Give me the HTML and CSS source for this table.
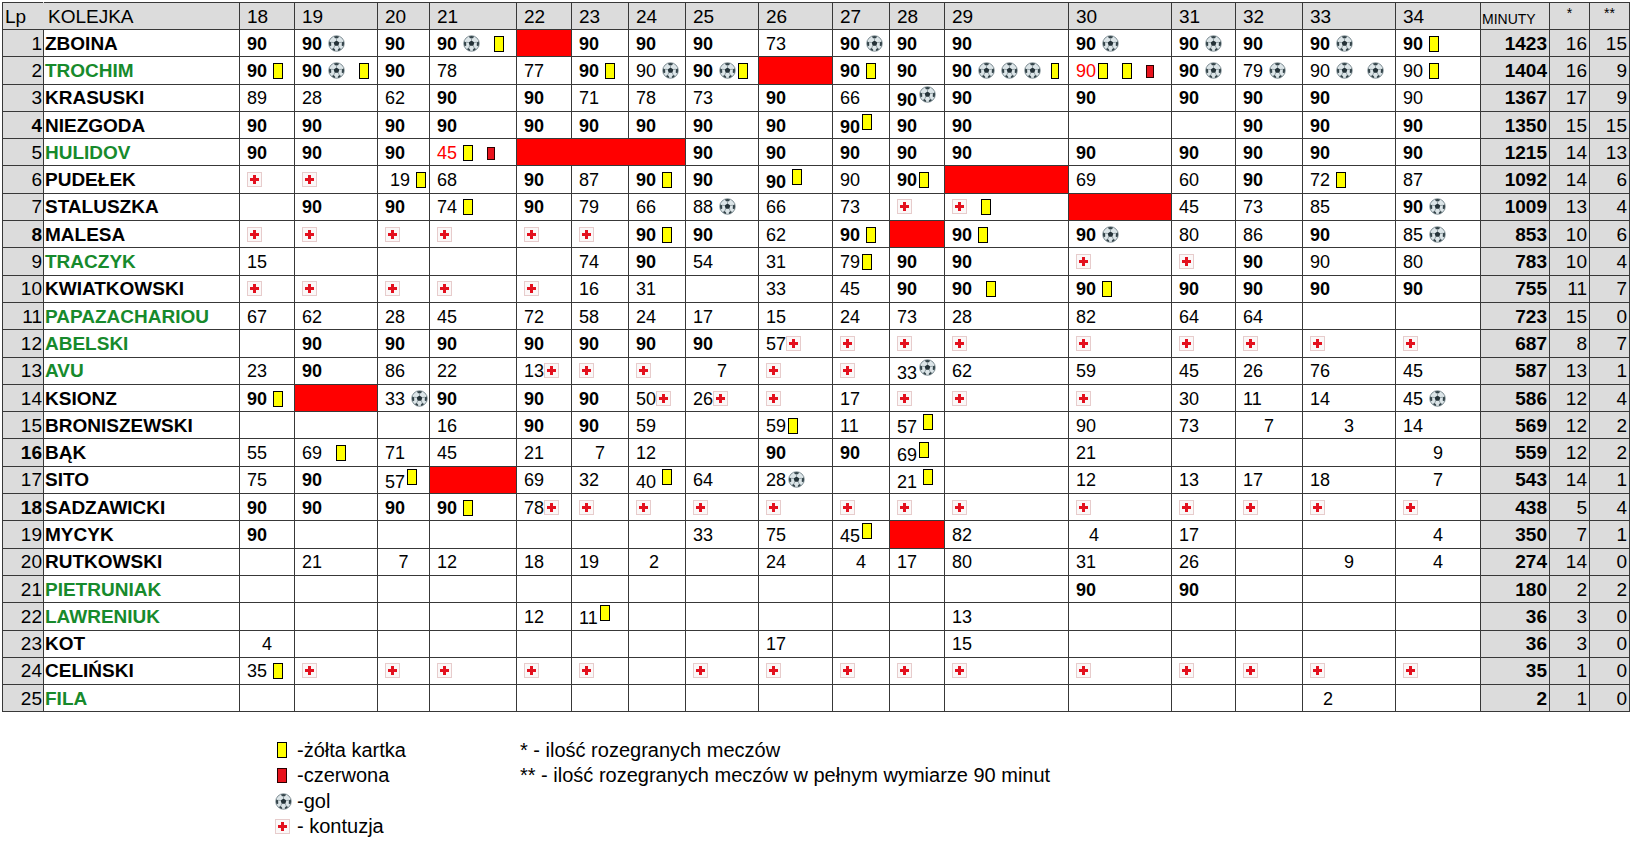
FILE: index.html
```html
<!DOCTYPE html>
<html lang="pl">
<head>
<meta charset="utf-8">
<title>Kolejka</title>
<link rel="stylesheet" href="styles.css">
</head>
<body>
<svg class="defs" width="0" height="0" aria-hidden="true">
  <symbol id="ball" viewBox="0 0 16 16">
    <circle cx="8" cy="8" r="7.3" fill="#dce5e8" stroke="#6f8086" stroke-width="0.8"/>
    <polygon points="8,5.2 10.7,7.1 9.7,10.2 6.3,10.2 5.3,7.1" fill="#243238"/>
    <path d="M5.5 1.3 Q8 0.5 10.5 1.3 L9.4 3 L6.6 3 Z" fill="#34444a"/>
    <path d="M1.1 6 L2.9 6.8 L3.1 9.8 L1.5 10.8 Q0.6 8.4 1.1 6Z" fill="#34444a"/>
    <path d="M14.9 6 L13.1 6.8 L12.9 9.8 L14.5 10.8 Q15.4 8.4 14.9 6Z" fill="#34444a"/>
    <path d="M3.6 13.2 L5.4 12.2 L6.8 13.8 L6.4 15 Q4.8 14.6 3.6 13.2Z" fill="#34444a"/>
    <path d="M12.4 13.2 L10.6 12.2 L9.2 13.8 L9.6 15 Q11.2 14.6 12.4 13.2Z" fill="#34444a"/>
    <path d="M8 3 V5.2 M5.3 7.1 L2.9 6.8 M10.7 7.1 L13.1 6.8 M6.3 10.2 L5.4 12.2 M9.7 10.2 L10.6 12.2" stroke="#6d7d83" stroke-width="0.6" fill="none"/>
  </symbol>
</svg>

<table class="kol">
  <colgroup>
    <col class="w-lp"><col class="w-nm">
    <col class="w18"><col class="w19"><col class="w20"><col class="w21"><col class="w22"><col class="w23"><col class="w24"><col class="w25"><col class="w26"><col class="w27"><col class="w28"><col class="w29"><col class="w30"><col class="w31"><col class="w32"><col class="w33"><col class="w34">
    <col class="w-mn"><col class="w-s"><col class="w-s">
  </colgroup>
  <thead>
    <tr>
      <th class="h-lp">Lp</th><th class="h-nm">KOLEJKA</th>
      <th>18</th><th>19</th><th>20</th><th>21</th><th>22</th><th>23</th><th>24</th><th>25</th><th>26</th><th>27</th><th>28</th><th>29</th><th>30</th><th>31</th><th>32</th><th>33</th><th>34</th>
      <th class="h-mn">MINUTY</th><th class="h-s">*</th><th class="h-s">**</th>
    </tr>
  </thead>
  <tbody>
    <tr>
      <td class="lp">1</td><td class="nm">ZBOINA</td>
      <td><b>90</b></td><td><b>90</b><svg class="ball"><use href="#ball"/></svg></td><td><b>90</b></td><td><b>90</b><svg class="ball"><use href="#ball"/></svg><i class="yc sp"></i></td><td class="x"></td><td><b>90</b></td><td><b>90</b></td><td><b>90</b></td><td>73</td><td><b>90</b><svg class="ball"><use href="#ball"/></svg></td><td><b>90</b></td><td><b>90</b></td><td><b>90</b><svg class="ball"><use href="#ball"/></svg></td><td><b>90</b><svg class="ball"><use href="#ball"/></svg></td><td><b>90</b></td><td><b>90</b><svg class="ball"><use href="#ball"/></svg></td><td><b>90</b><i class="yc"></i></td>
      <td class="mn">1423</td><td class="st">16</td><td class="st">15</td>
    </tr>
    <tr>
      <td class="lp">2</td><td class="nm gr">TROCHIM</td>
      <td><b>90</b><i class="yc"></i></td><td><b>90</b><svg class="ball"><use href="#ball"/></svg><i class="yc sp"></i></td><td><b>90</b></td><td>78</td><td>77</td><td><b>90</b><i class="yc"></i></td><td>90<svg class="ball"><use href="#ball"/></svg></td><td><b>90</b><svg class="ball"><use href="#ball"/></svg><i class="yc t"></i></td><td class="x"></td><td><b>90</b><i class="yc"></i></td><td><b>90</b></td><td><b>90</b><svg class="ball"><use href="#ball"/></svg><svg class="ball"><use href="#ball"/></svg><svg class="ball"><use href="#ball"/></svg><i class="yc sm"></i></td><td><span class="rt">90</span><i class="yc t"></i><i class="yc sp"></i><i class="rc sp"></i></td><td><b>90</b><svg class="ball"><use href="#ball"/></svg></td><td>79<svg class="ball"><use href="#ball"/></svg></td><td>90<svg class="ball"><use href="#ball"/></svg><svg class="ball sp"><use href="#ball"/></svg></td><td>90<i class="yc"></i></td>
      <td class="mn">1404</td><td class="st">16</td><td class="st">9</td>
    </tr>
    <tr>
      <td class="lp">3</td><td class="nm">KRASUSKI</td>
      <td>89</td><td>28</td><td>62</td><td><b>90</b></td><td><b>90</b></td><td>71</td><td>78</td><td>73</td><td><b>90</b></td><td>66</td><td><b>90</b><svg class="ball up t"><use href="#ball"/></svg></td><td><b>90</b></td><td><b>90</b></td><td><b>90</b></td><td><b>90</b></td><td><b>90</b></td><td>90</td>
      <td class="mn">1367</td><td class="st">17</td><td class="st">9</td>
    </tr>
    <tr>
      <td class="lp lb">4</td><td class="nm">NIEZGODA</td>
      <td><b>90</b></td><td><b>90</b></td><td><b>90</b></td><td><b>90</b></td><td><b>90</b></td><td><b>90</b></td><td><b>90</b></td><td><b>90</b></td><td><b>90</b></td><td><b>90</b><i class="yc t up"></i></td><td><b>90</b></td><td><b>90</b></td><td></td><td></td><td><b>90</b></td><td><b>90</b></td><td><b>90</b></td>
      <td class="mn">1350</td><td class="st">15</td><td class="st">15</td>
    </tr>
    <tr>
      <td class="lp">5</td><td class="nm gr">HULIDOV</td>
      <td><b>90</b></td><td><b>90</b></td><td><b>90</b></td><td><span class="rt">45</span><i class="yc"></i><i class="rc sp"></i></td><td class="x" colspan="3"></td><td><b>90</b></td><td><b>90</b></td><td><b>90</b></td><td><b>90</b></td><td><b>90</b></td><td><b>90</b></td><td><b>90</b></td><td><b>90</b></td><td><b>90</b></td><td><b>90</b></td>
      <td class="mn">1215</td><td class="st">14</td><td class="st">13</td>
    </tr>
    <tr>
      <td class="lp">6</td><td class="nm">PUDEŁEK</td>
      <td><i class="inj"></i></td><td><i class="inj"></i></td><td class="m2">19<i class="yc"></i></td><td>68</td><td><b>90</b></td><td>87</td><td><b>90</b><i class="yc"></i></td><td><b>90</b></td><td><b>90</b><i class="yc up"></i></td><td>90</td><td><b>90</b><i class="yc t"></i></td><td class="x"></td><td>69</td><td>60</td><td><b>90</b></td><td>72<i class="yc"></i></td><td>87</td>
      <td class="mn">1092</td><td class="st">14</td><td class="st">6</td>
    </tr>
    <tr>
      <td class="lp">7</td><td class="nm">STALUSZKA</td>
      <td></td><td><b>90</b></td><td><b>90</b></td><td>74<i class="yc"></i></td><td><b>90</b></td><td>79</td><td>66</td><td>88<svg class="ball"><use href="#ball"/></svg></td><td>66</td><td>73</td><td><i class="inj"></i></td><td><i class="inj"></i><i class="yc sp"></i></td><td class="x"></td><td>45</td><td>73</td><td>85</td><td><b>90</b><svg class="ball"><use href="#ball"/></svg></td>
      <td class="mn">1009</td><td class="st">13</td><td class="st">4</td>
    </tr>
    <tr>
      <td class="lp lb">8</td><td class="nm">MALESA</td>
      <td><i class="inj"></i></td><td><i class="inj"></i></td><td><i class="inj"></i></td><td><i class="inj"></i></td><td><i class="inj"></i></td><td><i class="inj"></i></td><td><b>90</b><i class="yc"></i></td><td><b>90</b></td><td>62</td><td><b>90</b><i class="yc"></i></td><td class="x"></td><td><b>90</b><i class="yc"></i></td><td><b>90</b><svg class="ball"><use href="#ball"/></svg></td><td>80</td><td>86</td><td><b>90</b></td><td>85<svg class="ball"><use href="#ball"/></svg></td>
      <td class="mn">853</td><td class="st">10</td><td class="st">6</td>
    </tr>
    <tr>
      <td class="lp">9</td><td class="nm gr">TRACZYK</td>
      <td>15</td><td></td><td></td><td></td><td></td><td>74</td><td><b>90</b></td><td>54</td><td>31</td><td>79<i class="yc t"></i></td><td><b>90</b></td><td><b>90</b></td><td><i class="inj"></i></td><td><i class="inj"></i></td><td><b>90</b></td><td>90</td><td>80</td>
      <td class="mn">783</td><td class="st">10</td><td class="st">4</td>
    </tr>
    <tr>
      <td class="lp">10</td><td class="nm">KWIATKOWSKI</td>
      <td><i class="inj"></i></td><td><i class="inj"></i></td><td><i class="inj"></i></td><td><i class="inj"></i></td><td><i class="inj"></i></td><td>16</td><td>31</td><td></td><td>33</td><td>45</td><td><b>90</b></td><td><b>90</b><i class="yc sp"></i></td><td><b>90</b><i class="yc"></i></td><td><b>90</b></td><td><b>90</b></td><td><b>90</b></td><td><b>90</b></td>
      <td class="mn">755</td><td class="st">11</td><td class="st">7</td>
    </tr>
    <tr>
      <td class="lp">11</td><td class="nm gr">PAPAZACHARIOU</td>
      <td>67</td><td>62</td><td>28</td><td>45</td><td>72</td><td>58</td><td>24</td><td>17</td><td>15</td><td>24</td><td>73</td><td>28</td><td>82</td><td>64</td><td>64</td><td></td><td></td>
      <td class="mn">723</td><td class="st">15</td><td class="st">0</td>
    </tr>
    <tr>
      <td class="lp">12</td><td class="nm gr">ABELSKI</td>
      <td></td><td><b>90</b></td><td><b>90</b></td><td><b>90</b></td><td><b>90</b></td><td><b>90</b></td><td><b>90</b></td><td><b>90</b></td><td>57<i class="inj"></i></td><td><i class="inj"></i></td><td><i class="inj"></i></td><td><i class="inj"></i></td><td><i class="inj"></i></td><td><i class="inj"></i></td><td><i class="inj"></i></td><td><i class="inj"></i></td><td><i class="inj"></i></td>
      <td class="mn">687</td><td class="st">8</td><td class="st">7</td>
    </tr>
    <tr>
      <td class="lp">13</td><td class="nm gr">AVU</td>
      <td>23</td><td><b>90</b></td><td>86</td><td>22</td><td>13<i class="inj"></i></td><td><i class="inj"></i></td><td><i class="inj"></i></td><td class="c">7</td><td><i class="inj"></i></td><td><i class="inj"></i></td><td>33<svg class="ball t up"><use href="#ball"/></svg></td><td>62</td><td>59</td><td>45</td><td>26</td><td>76</td><td>45</td>
      <td class="mn">587</td><td class="st">13</td><td class="st">1</td>
    </tr>
    <tr>
      <td class="lp">14</td><td class="nm">KSIONZ</td>
      <td><b>90</b><i class="yc"></i></td><td class="x"></td><td>33<svg class="ball"><use href="#ball"/></svg></td><td><b>90</b></td><td><b>90</b></td><td><b>90</b></td><td>50<i class="inj"></i></td><td>26<i class="inj"></i></td><td><i class="inj"></i></td><td>17</td><td><i class="inj"></i></td><td><i class="inj"></i></td><td><i class="inj"></i></td><td>30</td><td>11</td><td>14</td><td>45<svg class="ball"><use href="#ball"/></svg></td>
      <td class="mn">586</td><td class="st">12</td><td class="st">4</td>
    </tr>
    <tr>
      <td class="lp">15</td><td class="nm">BRONISZEWSKI</td>
      <td></td><td></td><td></td><td>16</td><td><b>90</b></td><td><b>90</b></td><td>59</td><td></td><td>59<i class="yc t"></i></td><td>11</td><td>57<i class="yc up"></i></td><td></td><td>90</td><td>73</td><td class="c">7</td><td class="c">3</td><td>14</td>
      <td class="mn">569</td><td class="st">12</td><td class="st">2</td>
    </tr>
    <tr>
      <td class="lp lb">16</td><td class="nm">BĄK</td>
      <td>55</td><td>69<i class="yc sp"></i></td><td>71</td><td>45</td><td>21</td><td class="c">7</td><td>12</td><td></td><td><b>90</b></td><td><b>90</b></td><td>69<i class="yc t up"></i></td><td></td><td>21</td><td></td><td></td><td></td><td class="c">9</td>
      <td class="mn">559</td><td class="st">12</td><td class="st">2</td>
    </tr>
    <tr>
      <td class="lp">17</td><td class="nm">SITO</td>
      <td>75</td><td><b>90</b></td><td>57<i class="yc t up"></i></td><td class="x"></td><td>69</td><td>32</td><td>40<i class="yc up"></i></td><td>64</td><td>28<svg class="ball t"><use href="#ball"/></svg></td><td></td><td>21<i class="yc up"></i></td><td></td><td>12</td><td>13</td><td>17</td><td>18</td><td class="c">7</td>
      <td class="mn">543</td><td class="st">14</td><td class="st">1</td>
    </tr>
    <tr>
      <td class="lp lb">18</td><td class="nm">SADZAWICKI</td>
      <td><b>90</b></td><td><b>90</b></td><td><b>90</b></td><td><b>90</b><i class="yc"></i></td><td>78<i class="inj"></i></td><td><i class="inj"></i></td><td><i class="inj"></i></td><td><i class="inj"></i></td><td><i class="inj"></i></td><td><i class="inj"></i></td><td><i class="inj"></i></td><td><i class="inj"></i></td><td><i class="inj"></i></td><td><i class="inj"></i></td><td><i class="inj"></i></td><td><i class="inj"></i></td><td><i class="inj"></i></td>
      <td class="mn">438</td><td class="st">5</td><td class="st">4</td>
    </tr>
    <tr>
      <td class="lp">19</td><td class="nm">MYCYK</td>
      <td><b>90</b></td><td></td><td></td><td></td><td></td><td></td><td></td><td>33</td><td>75</td><td>45<i class="yc t up"></i></td><td class="x"></td><td>82</td><td class="m">4</td><td>17</td><td></td><td></td><td class="c">4</td>
      <td class="mn">350</td><td class="st">7</td><td class="st">1</td>
    </tr>
    <tr>
      <td class="lp">20</td><td class="nm">RUTKOWSKI</td>
      <td></td><td>21</td><td class="c">7</td><td>12</td><td>18</td><td>19</td><td class="m">2</td><td></td><td>24</td><td class="c">4</td><td>17</td><td>80</td><td>31</td><td>26</td><td></td><td class="c">9</td><td class="c">4</td>
      <td class="mn">274</td><td class="st">14</td><td class="st">0</td>
    </tr>
    <tr>
      <td class="lp">21</td><td class="nm gr">PIETRUNIAK</td>
      <td></td><td></td><td></td><td></td><td></td><td></td><td></td><td></td><td></td><td></td><td></td><td></td><td><b>90</b></td><td><b>90</b></td><td></td><td></td><td></td>
      <td class="mn">180</td><td class="st">2</td><td class="st">2</td>
    </tr>
    <tr>
      <td class="lp">22</td><td class="nm gr">LAWRENIUK</td>
      <td></td><td></td><td></td><td></td><td>12</td><td>11<i class="yc t up"></i></td><td></td><td></td><td></td><td></td><td></td><td>13</td><td></td><td></td><td></td><td></td><td></td>
      <td class="mn">36</td><td class="st">3</td><td class="st">0</td>
    </tr>
    <tr>
      <td class="lp">23</td><td class="nm">KOT</td>
      <td class="c">4</td><td></td><td></td><td></td><td></td><td></td><td></td><td></td><td>17</td><td></td><td></td><td>15</td><td></td><td></td><td></td><td></td><td></td>
      <td class="mn">36</td><td class="st">3</td><td class="st">0</td>
    </tr>
    <tr>
      <td class="lp">24</td><td class="nm">CELIŃSKI</td>
      <td>35<i class="yc"></i></td><td><i class="inj"></i></td><td><i class="inj"></i></td><td><i class="inj"></i></td><td><i class="inj"></i></td><td><i class="inj"></i></td><td></td><td><i class="inj"></i></td><td><i class="inj"></i></td><td><i class="inj"></i></td><td><i class="inj"></i></td><td><i class="inj"></i></td><td><i class="inj"></i></td><td><i class="inj"></i></td><td><i class="inj"></i></td><td><i class="inj"></i></td><td><i class="inj"></i></td>
      <td class="mn">35</td><td class="st">1</td><td class="st">0</td>
    </tr>
    <tr>
      <td class="lp">25</td><td class="nm gr">FILA</td>
      <td></td><td></td><td></td><td></td><td></td><td></td><td></td><td></td><td></td><td></td><td></td><td></td><td></td><td></td><td></td><td class="m">2</td><td></td>
      <td class="mn">2</td><td class="st">1</td><td class="st">0</td>
    </tr>
  </tbody>
</table>

<div class="legend">
  <ul class="leg-icons">
    <li><span class="ico"><i class="yc"></i></span>-żółta kartka</li>
    <li><span class="ico"><i class="rc"></i></span> -czerwona</li>
    <li><span class="ico"><svg class="ball"><use href="#ball"/></svg></span>-gol</li>
    <li><span class="ico"><i class="inj"></i></span> - kontuzja</li>
  </ul>
  <ul class="leg-notes">
    <li>* - ilość rozegranych meczów</li>
    <li>** - ilość rozegranych meczów w pełnym wymiarze 90 minut</li>
  </ul>
</div>
</body>
</html>
```

FILE: styles.css
```css
body {
  margin: 0;
  padding: 2px 0 0 2px;
  background: #ffffff;
  color: #000000;
  font-family: "Liberation Sans", Arial, sans-serif;
}

.defs {
  position: absolute;
  width: 0;
  height: 0;
  overflow: hidden;
}

.kol {
  border-collapse: collapse;
  table-layout: fixed;
  width: 1627px;
  font-size: 18px;
}

.w-lp { width: 41px; }
.w-nm { width: 196px; }
.w18 { width: 55px; }
.w19 { width: 83px; }
.w20 { width: 52px; }
.w21 { width: 87px; }
.w22 { width: 55px; }
.w23 { width: 57px; }
.w24 { width: 57px; }
.w25 { width: 73px; }
.w26 { width: 74px; }
.w27 { width: 57px; }
.w28 { width: 55px; }
.w29 { width: 124px; }
.w30 { width: 103px; }
.w31 { width: 64px; }
.w32 { width: 67px; }
.w33 { width: 93px; }
.w34 { width: 85px; }
.w-mn { width: 69px; }
.w-s { width: 40px; }

.kol th,
.kol td {
  border: 1px solid #383838;
  padding: 1px 0 0 7px;
  height: 25.3px;
  white-space: nowrap;
  overflow: hidden;
  text-align: left;
  vertical-align: middle;
  font-weight: normal;
  line-height: 20px;
}

.kol thead th {
  background: #dcdcdc;
  font-size: 19px;
  height: 25px;
  padding-top: 1px;
}

.kol thead .h-lp {
  padding-left: 2px;
  border-right-color: #dcdcdc;
}

.kol thead .h-nm {
  padding-left: 4px;
}

.kol thead .h-mn {
  font-size: 14px;
  padding-left: 1px;
  vertical-align: bottom;
}

.kol thead .h-s {
  font-size: 14px;
  text-align: center;
  padding: 0;
  vertical-align: top;
}

.kol .lp {
  background: #dcdcdc;
  text-align: right;
  padding-left: 0;
  padding-right: 1px;
  font-size: 19px;
}

.kol .lp.lb {
  font-weight: bold;
}

.kol .nm {
  font-weight: bold;
  font-size: 19px;
  padding-left: 1px;
}

.kol .nm.gr {
  color: #178a2c;
}

.kol .mn {
  background: #dcdcdc;
  font-weight: bold;
  text-align: right;
  padding-left: 0;
  padding-right: 2px;
  font-size: 19px;
}

.kol .st {
  background: #dcdcdc;
  text-align: right;
  padding-left: 0;
  padding-right: 2px;
  font-size: 19px;
}

.kol .x {
  background: #ff0000;
}

.kol .c {
  text-align: center;
  padding-left: 0;
}

.kol .m {
  padding-left: 20px;
}

.kol .m2 {
  padding-left: 12px;
}

.rt {
  color: #ff0000;
}

.yc,
.rc,
.inj,
.ball {
  display: inline-block;
  box-sizing: border-box;
  margin-left: 6px;
}

.yc {
  width: 10px;
  height: 16px;
  background: #ffff00;
  border: 1.5px solid #000000;
  vertical-align: -2px;
}

.rc {
  width: 8px;
  height: 13px;
  background: #e8121c;
  border: 1.5px solid #2a0000;
  vertical-align: -1px;
}

.ball {
  width: 17px;
  height: 17px;
  vertical-align: -2px;
}

.inj {
  position: relative;
  width: 15px;
  height: 15px;
  border: 1px solid #e7cccc;
  background: #fbf8f8;
  vertical-align: -1px;
}

.inj::before,
.inj::after {
  content: "";
  position: absolute;
  background: #e3101e;
}

.inj::before {
  left: 2px;
  top: 5px;
  width: 9px;
  height: 3px;
}

.inj::after {
  left: 5px;
  top: 2px;
  width: 3px;
  height: 9px;
}

.kol td > .inj:first-child {
  margin-left: 0;
}

.yc.t,
.ball.t {
  margin-left: 2px;
}

.yc.sp,
.rc.sp,
.ball.sp {
  margin-left: 14px;
}

.yc.sm {
  width: 8px;
  margin-left: 10px;
}

.yc.up,
.ball.up {
  vertical-align: 3px;
}

.legend {
  display: flex;
  margin: 25px 0 0 273px;
  font-size: 20px;
}

.legend ul {
  list-style: none;
  margin: 0;
  padding: 0;
}

.legend li {
  display: flex;
  align-items: center;
  height: 25.5px;
  white-space: nowrap;
}

.leg-icons {
  width: 245px;
}

.legend .ico {
  display: flex;
  align-items: center;
  width: 22px;
  height: 20px;
}

.legend .ico > * {
  margin-left: 0;
}

.legend .yc {
  margin-left: 2px;
}

.legend .rc {
  width: 10px;
  height: 15px;
  margin-left: 2px;
}
```
